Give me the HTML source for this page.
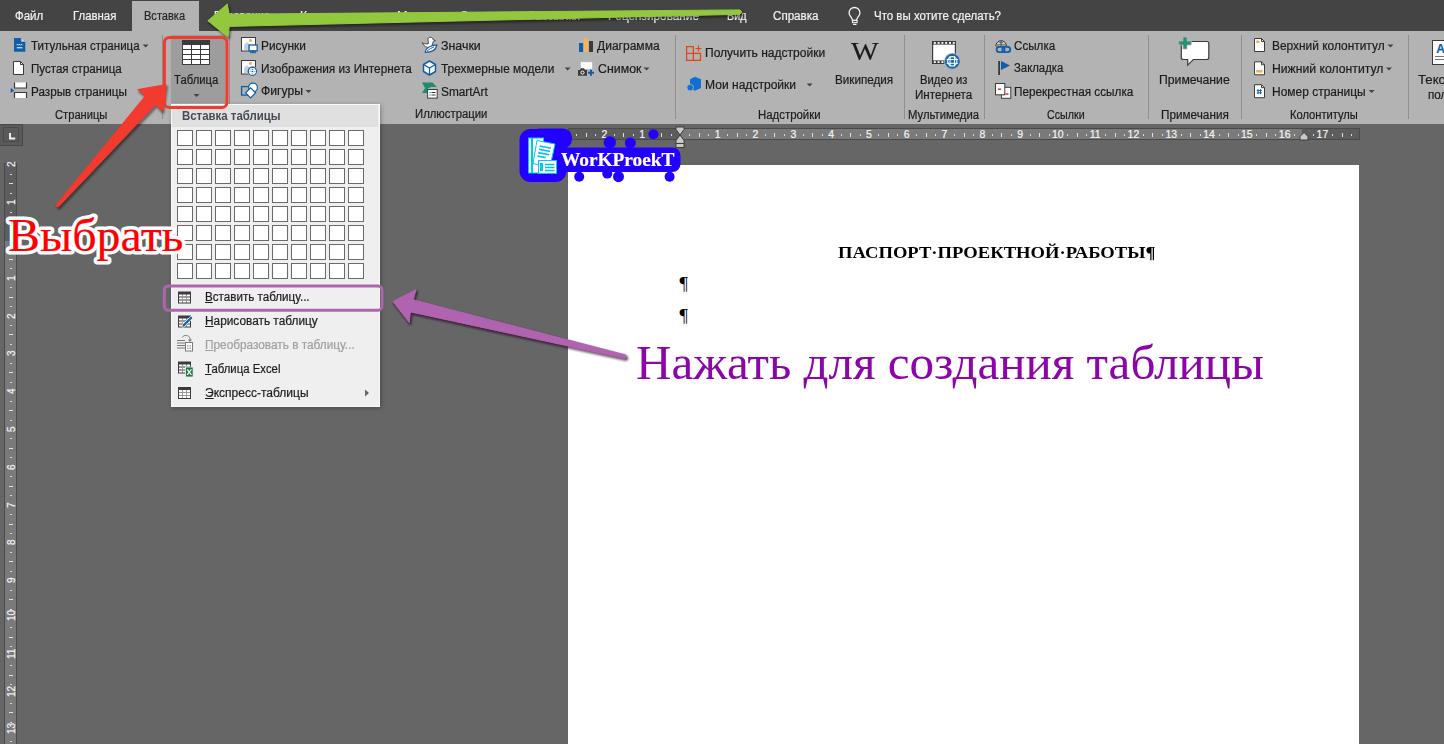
<!DOCTYPE html><html><head><meta charset="utf-8"><style>
html,body{margin:0;padding:0;width:1444px;height:744px;overflow:hidden;background:#666;}
.b{position:absolute}
.t{position:absolute;white-space:nowrap;transform-origin:0 0;-webkit-text-stroke:0.2px currentColor}
svg{position:absolute;overflow:visible}
</style></head><body>
<div class="b" style="left:0px;top:0px;width:1444px;height:31px;background:#444444;"></div>
<div class="b" style="left:0px;top:31px;width:1444px;height:93px;background:#b3b3b3;"></div>
<div class="b" style="left:132px;top:1px;width:67px;height:30px;background:#b3b3b3;"></div>
<div class="b" style="left:0px;top:124px;width:1444px;height:620px;background:#666666;"></div>
<div class="b" style="left:162px;top:35px;width:1px;height:84px;background:#8f8f8f;"></div>
<div class="b" style="left:229px;top:35px;width:1px;height:84px;background:#8f8f8f;"></div>
<div class="b" style="left:675px;top:35px;width:1px;height:84px;background:#8f8f8f;"></div>
<div class="b" style="left:904px;top:35px;width:1px;height:84px;background:#8f8f8f;"></div>
<div class="b" style="left:984px;top:35px;width:1px;height:84px;background:#8f8f8f;"></div>
<div class="b" style="left:1148px;top:35px;width:1px;height:84px;background:#8f8f8f;"></div>
<div class="b" style="left:1241px;top:35px;width:1px;height:84px;background:#8f8f8f;"></div>
<div class="b" style="left:1408px;top:35px;width:1px;height:84px;background:#8f8f8f;"></div>
<div class="b" style="left:568px;top:128px;width:792px;height:12px;background:#4a4a4a;"></div>
<div class="b" style="left:569px;top:129px;width:790px;height:10px;background:#5d5d5d;"></div>
<div class="b" style="left:680px;top:129px;width:622px;height:10px;background:#7a7a7a;"></div>
<div class="b" style="left:4px;top:163px;width:13px;height:581px;background:#4a4a4a;"></div>
<div class="b" style="left:5px;top:164px;width:11px;height:580px;background:#5d5d5d;"></div>
<div class="b" style="left:5px;top:241px;width:11px;height:503px;background:#7a7a7a;"></div>
<div class="b" style="left:-1px;top:124px;width:24px;height:22px;background:#5a5a5a;box-sizing:border-box;border:1px solid #484848"></div>
<div class="b" style="left:3px;top:127px;width:16px;height:15px;background:transparent;box-sizing:border-box;border:1px solid #4a4a4a"></div>
<div class="b" style="left:568px;top:165px;width:791px;height:579px;background:#ffffff;"></div>
<div class="b" style="left:576px;top:134px;width:1px;height:2px;background:#d8d8d8;"></div>
<div class="b" style="left:586px;top:133px;width:1px;height:4px;background:#e0e0e0;"></div>
<div class="b" style="left:595px;top:134px;width:1px;height:2px;background:#d8d8d8;"></div>
<div class="b" style="left:614px;top:134px;width:1px;height:2px;background:#d8d8d8;"></div>
<div class="b" style="left:623px;top:133px;width:1px;height:4px;background:#e0e0e0;"></div>
<div class="b" style="left:633px;top:134px;width:1px;height:2px;background:#d8d8d8;"></div>
<div class="b" style="left:652px;top:134px;width:1px;height:2px;background:#d8d8d8;"></div>
<div class="b" style="left:661px;top:133px;width:1px;height:4px;background:#e0e0e0;"></div>
<div class="b" style="left:671px;top:134px;width:1px;height:2px;background:#d8d8d8;"></div>
<div class="b" style="left:689px;top:134px;width:1px;height:2px;background:#d8d8d8;"></div>
<div class="b" style="left:699px;top:133px;width:1px;height:4px;background:#e0e0e0;"></div>
<div class="b" style="left:708px;top:134px;width:1px;height:2px;background:#d8d8d8;"></div>
<div class="b" style="left:727px;top:134px;width:1px;height:2px;background:#d8d8d8;"></div>
<div class="b" style="left:737px;top:133px;width:1px;height:4px;background:#e0e0e0;"></div>
<div class="b" style="left:746px;top:134px;width:1px;height:2px;background:#d8d8d8;"></div>
<div class="b" style="left:765px;top:134px;width:1px;height:2px;background:#d8d8d8;"></div>
<div class="b" style="left:774px;top:133px;width:1px;height:4px;background:#e0e0e0;"></div>
<div class="b" style="left:784px;top:134px;width:1px;height:2px;background:#d8d8d8;"></div>
<div class="b" style="left:803px;top:134px;width:1px;height:2px;background:#d8d8d8;"></div>
<div class="b" style="left:812px;top:133px;width:1px;height:4px;background:#e0e0e0;"></div>
<div class="b" style="left:822px;top:134px;width:1px;height:2px;background:#d8d8d8;"></div>
<div class="b" style="left:841px;top:134px;width:1px;height:2px;background:#d8d8d8;"></div>
<div class="b" style="left:850px;top:133px;width:1px;height:4px;background:#e0e0e0;"></div>
<div class="b" style="left:860px;top:134px;width:1px;height:2px;background:#d8d8d8;"></div>
<div class="b" style="left:878px;top:134px;width:1px;height:2px;background:#d8d8d8;"></div>
<div class="b" style="left:888px;top:133px;width:1px;height:4px;background:#e0e0e0;"></div>
<div class="b" style="left:897px;top:134px;width:1px;height:2px;background:#d8d8d8;"></div>
<div class="b" style="left:916px;top:134px;width:1px;height:2px;background:#d8d8d8;"></div>
<div class="b" style="left:926px;top:133px;width:1px;height:4px;background:#e0e0e0;"></div>
<div class="b" style="left:935px;top:134px;width:1px;height:2px;background:#d8d8d8;"></div>
<div class="b" style="left:954px;top:134px;width:1px;height:2px;background:#d8d8d8;"></div>
<div class="b" style="left:964px;top:133px;width:1px;height:4px;background:#e0e0e0;"></div>
<div class="b" style="left:973px;top:134px;width:1px;height:2px;background:#d8d8d8;"></div>
<div class="b" style="left:992px;top:134px;width:1px;height:2px;background:#d8d8d8;"></div>
<div class="b" style="left:1001px;top:133px;width:1px;height:4px;background:#e0e0e0;"></div>
<div class="b" style="left:1011px;top:134px;width:1px;height:2px;background:#d8d8d8;"></div>
<div class="b" style="left:1030px;top:134px;width:1px;height:2px;background:#d8d8d8;"></div>
<div class="b" style="left:1039px;top:133px;width:1px;height:4px;background:#e0e0e0;"></div>
<div class="b" style="left:1049px;top:134px;width:1px;height:2px;background:#d8d8d8;"></div>
<div class="b" style="left:1067px;top:134px;width:1px;height:2px;background:#d8d8d8;"></div>
<div class="b" style="left:1077px;top:133px;width:1px;height:4px;background:#e0e0e0;"></div>
<div class="b" style="left:1086px;top:134px;width:1px;height:2px;background:#d8d8d8;"></div>
<div class="b" style="left:1105px;top:134px;width:1px;height:2px;background:#d8d8d8;"></div>
<div class="b" style="left:1115px;top:133px;width:1px;height:4px;background:#e0e0e0;"></div>
<div class="b" style="left:1124px;top:134px;width:1px;height:2px;background:#d8d8d8;"></div>
<div class="b" style="left:1143px;top:134px;width:1px;height:2px;background:#d8d8d8;"></div>
<div class="b" style="left:1152px;top:133px;width:1px;height:4px;background:#e0e0e0;"></div>
<div class="b" style="left:1162px;top:134px;width:1px;height:2px;background:#d8d8d8;"></div>
<div class="b" style="left:1181px;top:134px;width:1px;height:2px;background:#d8d8d8;"></div>
<div class="b" style="left:1190px;top:133px;width:1px;height:4px;background:#e0e0e0;"></div>
<div class="b" style="left:1200px;top:134px;width:1px;height:2px;background:#d8d8d8;"></div>
<div class="b" style="left:1219px;top:134px;width:1px;height:2px;background:#d8d8d8;"></div>
<div class="b" style="left:1228px;top:133px;width:1px;height:4px;background:#e0e0e0;"></div>
<div class="b" style="left:1238px;top:134px;width:1px;height:2px;background:#d8d8d8;"></div>
<div class="b" style="left:1256px;top:134px;width:1px;height:2px;background:#d8d8d8;"></div>
<div class="b" style="left:1266px;top:133px;width:1px;height:4px;background:#e0e0e0;"></div>
<div class="b" style="left:1275px;top:134px;width:1px;height:2px;background:#d8d8d8;"></div>
<div class="b" style="left:1294px;top:134px;width:1px;height:2px;background:#d8d8d8;"></div>
<div class="b" style="left:1304px;top:133px;width:1px;height:4px;background:#e0e0e0;"></div>
<div class="b" style="left:1313px;top:134px;width:1px;height:2px;background:#d8d8d8;"></div>
<div class="b" style="left:1332px;top:134px;width:1px;height:2px;background:#d8d8d8;"></div>
<div class="b" style="left:1342px;top:133px;width:1px;height:4px;background:#e0e0e0;"></div>
<div class="b" style="left:1351px;top:134px;width:1px;height:2px;background:#d8d8d8;"></div>
<div class="b" style="left:10px;top:174px;width:2px;height:1px;background:#d8d8d8;"></div>
<div class="b" style="left:9px;top:183px;width:4px;height:1px;background:#e0e0e0;"></div>
<div class="b" style="left:10px;top:193px;width:2px;height:1px;background:#d8d8d8;"></div>
<div class="b" style="left:10px;top:212px;width:2px;height:1px;background:#d8d8d8;"></div>
<div class="b" style="left:9px;top:221px;width:4px;height:1px;background:#e0e0e0;"></div>
<div class="b" style="left:10px;top:231px;width:2px;height:1px;background:#d8d8d8;"></div>
<div class="b" style="left:10px;top:249px;width:2px;height:1px;background:#d8d8d8;"></div>
<div class="b" style="left:9px;top:259px;width:4px;height:1px;background:#e0e0e0;"></div>
<div class="b" style="left:10px;top:268px;width:2px;height:1px;background:#d8d8d8;"></div>
<div class="b" style="left:10px;top:287px;width:2px;height:1px;background:#d8d8d8;"></div>
<div class="b" style="left:9px;top:297px;width:4px;height:1px;background:#e0e0e0;"></div>
<div class="b" style="left:10px;top:306px;width:2px;height:1px;background:#d8d8d8;"></div>
<div class="b" style="left:10px;top:325px;width:2px;height:1px;background:#d8d8d8;"></div>
<div class="b" style="left:9px;top:334px;width:4px;height:1px;background:#e0e0e0;"></div>
<div class="b" style="left:10px;top:344px;width:2px;height:1px;background:#d8d8d8;"></div>
<div class="b" style="left:10px;top:363px;width:2px;height:1px;background:#d8d8d8;"></div>
<div class="b" style="left:9px;top:372px;width:4px;height:1px;background:#e0e0e0;"></div>
<div class="b" style="left:10px;top:382px;width:2px;height:1px;background:#d8d8d8;"></div>
<div class="b" style="left:10px;top:401px;width:2px;height:1px;background:#d8d8d8;"></div>
<div class="b" style="left:9px;top:410px;width:4px;height:1px;background:#e0e0e0;"></div>
<div class="b" style="left:10px;top:420px;width:2px;height:1px;background:#d8d8d8;"></div>
<div class="b" style="left:10px;top:438px;width:2px;height:1px;background:#d8d8d8;"></div>
<div class="b" style="left:9px;top:448px;width:4px;height:1px;background:#e0e0e0;"></div>
<div class="b" style="left:10px;top:457px;width:2px;height:1px;background:#d8d8d8;"></div>
<div class="b" style="left:10px;top:476px;width:2px;height:1px;background:#d8d8d8;"></div>
<div class="b" style="left:9px;top:486px;width:4px;height:1px;background:#e0e0e0;"></div>
<div class="b" style="left:10px;top:495px;width:2px;height:1px;background:#d8d8d8;"></div>
<div class="b" style="left:10px;top:514px;width:2px;height:1px;background:#d8d8d8;"></div>
<div class="b" style="left:9px;top:524px;width:4px;height:1px;background:#e0e0e0;"></div>
<div class="b" style="left:10px;top:533px;width:2px;height:1px;background:#d8d8d8;"></div>
<div class="b" style="left:10px;top:552px;width:2px;height:1px;background:#d8d8d8;"></div>
<div class="b" style="left:9px;top:561px;width:4px;height:1px;background:#e0e0e0;"></div>
<div class="b" style="left:10px;top:571px;width:2px;height:1px;background:#d8d8d8;"></div>
<div class="b" style="left:10px;top:590px;width:2px;height:1px;background:#d8d8d8;"></div>
<div class="b" style="left:9px;top:599px;width:4px;height:1px;background:#e0e0e0;"></div>
<div class="b" style="left:10px;top:609px;width:2px;height:1px;background:#d8d8d8;"></div>
<div class="b" style="left:10px;top:627px;width:2px;height:1px;background:#d8d8d8;"></div>
<div class="b" style="left:9px;top:637px;width:4px;height:1px;background:#e0e0e0;"></div>
<div class="b" style="left:10px;top:646px;width:2px;height:1px;background:#d8d8d8;"></div>
<div class="b" style="left:10px;top:665px;width:2px;height:1px;background:#d8d8d8;"></div>
<div class="b" style="left:9px;top:675px;width:4px;height:1px;background:#e0e0e0;"></div>
<div class="b" style="left:10px;top:684px;width:2px;height:1px;background:#d8d8d8;"></div>
<div class="b" style="left:10px;top:703px;width:2px;height:1px;background:#d8d8d8;"></div>
<div class="b" style="left:9px;top:712px;width:4px;height:1px;background:#e0e0e0;"></div>
<div class="b" style="left:10px;top:722px;width:2px;height:1px;background:#d8d8d8;"></div>
<div class="b" style="left:10px;top:741px;width:2px;height:1px;background:#d8d8d8;"></div>
<div class="t" style="left:17px;top:164.4px;font:10px 'Liberation Sans', sans-serif;line-height:10px;color:#f4f4f4;transform:translate(-10px,0) rotate(-90deg);transform-origin:0 0"><span style="display:inline-block;transform:translate(-3px,0)">2</span></div>
<div class="t" style="left:17px;top:202.2px;font:10px 'Liberation Sans', sans-serif;line-height:10px;color:#f4f4f4;transform:translate(-10px,0) rotate(-90deg);transform-origin:0 0"><span style="display:inline-block;transform:translate(-3px,0)">1</span></div>
<div class="t" style="left:17px;top:277.8px;font:10px 'Liberation Sans', sans-serif;line-height:10px;color:#f4f4f4;transform:translate(-10px,0) rotate(-90deg);transform-origin:0 0"><span style="display:inline-block;transform:translate(-3px,0)">1</span></div>
<div class="t" style="left:17px;top:315.6px;font:10px 'Liberation Sans', sans-serif;line-height:10px;color:#f4f4f4;transform:translate(-10px,0) rotate(-90deg);transform-origin:0 0"><span style="display:inline-block;transform:translate(-3px,0)">2</span></div>
<div class="t" style="left:17px;top:353.4px;font:10px 'Liberation Sans', sans-serif;line-height:10px;color:#f4f4f4;transform:translate(-10px,0) rotate(-90deg);transform-origin:0 0"><span style="display:inline-block;transform:translate(-3px,0)">3</span></div>
<div class="t" style="left:17px;top:391.2px;font:10px 'Liberation Sans', sans-serif;line-height:10px;color:#f4f4f4;transform:translate(-10px,0) rotate(-90deg);transform-origin:0 0"><span style="display:inline-block;transform:translate(-3px,0)">4</span></div>
<div class="t" style="left:17px;top:429.0px;font:10px 'Liberation Sans', sans-serif;line-height:10px;color:#f4f4f4;transform:translate(-10px,0) rotate(-90deg);transform-origin:0 0"><span style="display:inline-block;transform:translate(-3px,0)">5</span></div>
<div class="t" style="left:17px;top:466.8px;font:10px 'Liberation Sans', sans-serif;line-height:10px;color:#f4f4f4;transform:translate(-10px,0) rotate(-90deg);transform-origin:0 0"><span style="display:inline-block;transform:translate(-3px,0)">6</span></div>
<div class="t" style="left:17px;top:504.6px;font:10px 'Liberation Sans', sans-serif;line-height:10px;color:#f4f4f4;transform:translate(-10px,0) rotate(-90deg);transform-origin:0 0"><span style="display:inline-block;transform:translate(-3px,0)">7</span></div>
<div class="t" style="left:17px;top:542.4px;font:10px 'Liberation Sans', sans-serif;line-height:10px;color:#f4f4f4;transform:translate(-10px,0) rotate(-90deg);transform-origin:0 0"><span style="display:inline-block;transform:translate(-3px,0)">8</span></div>
<div class="t" style="left:17px;top:580.2px;font:10px 'Liberation Sans', sans-serif;line-height:10px;color:#f4f4f4;transform:translate(-10px,0) rotate(-90deg);transform-origin:0 0"><span style="display:inline-block;transform:translate(-3px,0)">9</span></div>
<div class="t" style="left:17px;top:618.0px;font:10px 'Liberation Sans', sans-serif;line-height:10px;color:#f4f4f4;transform:translate(-10px,0) rotate(-90deg);transform-origin:0 0"><span style="display:inline-block;transform:translate(-3px,0)">10</span></div>
<div class="t" style="left:17px;top:655.8px;font:10px 'Liberation Sans', sans-serif;line-height:10px;color:#f4f4f4;transform:translate(-10px,0) rotate(-90deg);transform-origin:0 0"><span style="display:inline-block;transform:translate(-3px,0)">11</span></div>
<div class="t" style="left:17px;top:693.6px;font:10px 'Liberation Sans', sans-serif;line-height:10px;color:#f4f4f4;transform:translate(-10px,0) rotate(-90deg);transform-origin:0 0"><span style="display:inline-block;transform:translate(-3px,0)">12</span></div>
<div class="t" style="left:17px;top:731.4px;font:10px 'Liberation Sans', sans-serif;line-height:10px;color:#f4f4f4;transform:translate(-10px,0) rotate(-90deg);transform-origin:0 0"><span style="display:inline-block;transform:translate(-3px,0)">13</span></div>
<svg style="left:0;top:0" width="30" height="150"><path d="M10 133v5.5h5.2" stroke="#f2f2f2" stroke-width="1.9" fill="none"/></svg>
<svg style="left:0;top:0" width="1444" height="160"><path d="M676 127h8v2.5l-4 5.5 4 5.5v3h-8v-3l4-5.5-4-5.5z" fill="#c9c9c9" stroke="#3d3d3d" stroke-width="1"/><rect x="676" y="143.5" width="8" height="4" fill="#c9c9c9" stroke="#3d3d3d" stroke-width="1"/><path d="M1300 140h8v-3.5l-4-4-4 4z" fill="#c9c9c9" stroke="#3d3d3d" stroke-width="1"/></svg>
<div class="b" style="left:171px;top:35px;width:54px;height:68px;background:#9d9d9d;"></div>
<svg style="left:0;top:0" width="1444" height="130"><g transform="translate(0,0.8)"><path d="M852.5 19.5c-.3-1.8-1.2-2.8-2.2-4.2-.8-1-1.2-2-1.2-3.3 0-3 2.4-5.3 5.4-5.3s5.4 2.3 5.4 5.3c0 1.3-.4 2.3-1.2 3.3-1 1.4-1.9 2.4-2.2 4.2z" fill="none" stroke="#f2f2f2" stroke-width="1.3"/><rect x="852.5" y="19.6" width="4.6" height="2.2" fill="none" stroke="#f2f2f2" stroke-width="1.1"/><rect x="853" y="23" width="3.5" height="1.2" fill="#f2f2f2"/></g><path d="M14 38h7.3l4 3.5v10.2H14z" fill="#0f5ea8"/><path d="M21.3 38v3.5h4" fill="#cfe0f0" stroke="#b3b3b3" stroke-width="0.6"/><path d="M16.5 45.2l1-1 1 1 1-1 1 1 1-1 1 1" fill="none" stroke="#fff" stroke-width="0.9"/><rect x="16.8" y="47.3" width="5.6" height="1" fill="#fff"/><path d="M13.5 61.5h7l3 3v10h-10z" fill="#fff" stroke="#3b3b3b" stroke-width="1" stroke-linejoin="round"/><path d="M20.5 61.5v3h3" fill="none" stroke="#3b3b3b" stroke-width="1"/><path d="M14.5 82.5v5.5h12v-5.5" fill="#fff" stroke="#3b3b3b" stroke-width="1.2"/><path d="M14.5 98v-5.5h12v5.5" fill="#fff" stroke="#3b3b3b" stroke-width="1.2"/><path d="M10.7 88l3.5 2.5-3.5 2.5z" fill="#0f5ea8"/><rect x="182" y="40" width="28" height="25" fill="#3b3b3b"/><rect x="183.0" y="45" width="8" height="4" fill="#fff"/><rect x="192.0" y="45" width="8" height="4" fill="#fff"/><rect x="201.0" y="45" width="8" height="4" fill="#fff"/><rect x="183.0" y="50" width="8" height="4" fill="#fff"/><rect x="192.0" y="50" width="8" height="4" fill="#fff"/><rect x="201.0" y="50" width="8" height="4" fill="#fff"/><rect x="183.0" y="55" width="8" height="4" fill="#fff"/><rect x="192.0" y="55" width="8" height="4" fill="#fff"/><rect x="201.0" y="55" width="8" height="4" fill="#fff"/><rect x="183.0" y="60" width="8" height="4" fill="#fff"/><rect x="192.0" y="60" width="8" height="4" fill="#fff"/><rect x="201.0" y="60" width="8" height="4" fill="#fff"/><path d="M193.5 94h6l-3 3z" fill="#444"/><rect x="241.5" y="37.5" width="14" height="13.5" fill="#fff" stroke="#3b3b3b" stroke-width="1"/><path d="M244 50v-5l3-3 3 3v5z" fill="#b9d3ea"/><circle cx="250.5" cy="40.5" r="1.4" fill="#f0a848"/><rect x="249" y="45" width="8.2" height="5.8" fill="#fff" stroke="#0f5ea8" stroke-width="1.3"/><rect x="252.3" y="51" width="1.6" height="1.6" fill="#0f5ea8"/><rect x="250" y="52.2" width="6" height="1" fill="#0f5ea8"/><rect x="241.5" y="60.5" width="14" height="13.5" fill="#fff" stroke="#3b3b3b" stroke-width="1"/><path d="M244 73v-5l3-3 3 3v5z" fill="#b9d3ea"/><circle cx="250.5" cy="63.5" r="1.4" fill="#f0a848"/><circle cx="252.4" cy="71.3" r="5.2" fill="#b3b3b3"/><circle cx="252.4" cy="71.3" r="4.6" fill="#0f5ea8"/><circle cx="252.4" cy="71.3" r="2.85" fill="none" stroke="#fff" stroke-width="1.1"/><rect x="248.95" y="69.92" width="6.90" height="1" fill="#fff"/><rect x="248.95" y="72.22" width="6.90" height="1" fill="#fff"/><rect x="250.52" y="68.08" width="1" height="6.44" fill="#fff"/><rect x="253.28" y="68.08" width="1" height="6.44" fill="#fff"/><rect x="241.6" y="86.6" width="8.5" height="8.5" fill="none" stroke="#0f5ea8" stroke-width="1.3"/><circle cx="253" cy="87.5" r="4.4" fill="#fff" stroke="#0f5ea8" stroke-width="1.2"/><path d="M250.6 87.8l5 5-5 5-5-5z" fill="#fff" stroke="#0f5ea8" stroke-width="1.2"/><path d="M422.2 42.6c1.5 1.2 3.5 1.6 6 1.2 .3-1.6.2-2.6-.2-3.6-.4-1.6.8-2.9 2.4-2.9 1.5 0 2.6 1 2.7 2.4l2.3.9-2.2 1c-.1 1.2-.5 2.1-1.2 2.8 1.5.4 2.8 1.2 3.5 2.4-1.2.8-3 1.2-5.2 1.1-3.5-.2-6.8-1.6-8.1-5.3z" fill="#fff" stroke="#3b3b3b" stroke-width="0.9" stroke-linejoin="round"/><path d="M425.2 52.3c.2-3.6 3.4-6.6 11.7-7.5-.8 4.6-4 7.5-11.7 7.5z" fill="#fff" stroke="#0f5ea8" stroke-width="1.3" stroke-linejoin="round"/><path d="M427 51.2c2.2-2 4.5-3.3 7-4.3" stroke="#0f5ea8" stroke-width="1" fill="none"/><path d="M429.5 61l6 3.5v7l-6 3.5-6-3.5v-7z" fill="#fff" stroke="#0f5ea8" stroke-width="1.5" stroke-linejoin="round"/><path d="M423.5 64.5l6 3.5 6-3.5M429.5 68v7" fill="none" stroke="#0f5ea8" stroke-width="1.3"/><path d="M422 82.6h10.5l4.4 4.4H431l-4 2v4h-5l3-5z" fill="#1e8c6e"/><rect x="427.6" y="89.5" width="9.6" height="8.6" fill="#fff" stroke="#3b3b3b" stroke-width="1"/><rect x="429.5" y="92" width="1" height="1" fill="#3b3b3b"/><rect x="431.5" y="92" width="4" height="1" fill="#3b3b3b"/><rect x="429.5" y="94.5" width="1" height="1" fill="#3b3b3b"/><rect x="431.5" y="94.5" width="4" height="1" fill="#3b3b3b"/><rect x="579" y="43" width="4.1" height="9" fill="#0f5ea8"/><rect x="584" y="38" width="4.1" height="14" fill="#f0b462"/><rect x="589" y="41" width="4" height="11" fill="#3b3b3b"/><rect x="581" y="62.3" width="11" height="6.5" fill="#fff" stroke="#fff" stroke-width="0.8" stroke-dasharray="1 1"/><path d="M578 70h2l1-1.7h3l1 1.7h2v5.7h-9z" fill="#3b3b3b"/><circle cx="582.5" cy="72.6" r="1.6" fill="none" stroke="#fff" stroke-width="1"/><path d="M590 69.8h2v2h2v2h-2v2h-2v-2h-2v-2h2z" fill="#0f5ea8"/><path d="M686.6 46.6h6.8v6.8h7.1v6.9h-13.9zM686.6 53.4h6.8v6.9M693.4 53.4v6.9" fill="none" stroke="#e3431a" stroke-width="1.2"/><path d="M698.5 45.5v6M695.5 48.5h6" stroke="#e3431a" stroke-width="1.2"/><path d="M695 76.7l6 2.6v8.6l-6 2.9-5-2.3v-9.2z" fill="#1170cf"/><circle cx="690.2" cy="87.6" r="3.3" fill="#1170cf" stroke="#b3b3b3" stroke-width="0.8"/><rect x="932" y="41" width="24" height="23" fill="#3b3b3b"/><rect x="933.2" y="44.6" width="21.6" height="15.8" fill="#fff"/><rect x="933.8" y="42" width="2" height="1.8" fill="#fff"/><rect x="937.6" y="42" width="2" height="1.8" fill="#fff"/><rect x="941.4" y="42" width="2" height="1.8" fill="#fff"/><rect x="945.2" y="42" width="2" height="1.8" fill="#fff"/><rect x="949.0" y="42" width="2" height="1.8" fill="#fff"/><rect x="952.8" y="42" width="2" height="1.8" fill="#fff"/><rect x="933.8" y="61.2" width="2" height="1.8" fill="#fff"/><rect x="937.6" y="61.2" width="2" height="1.8" fill="#fff"/><rect x="941.4" y="61.2" width="2" height="1.8" fill="#fff"/><circle cx="952.3" cy="61.3" r="8.3" fill="#b3b3b3"/><circle cx="952.3" cy="61.3" r="7.5" fill="#1a6aaa"/><circle cx="952.3" cy="61.3" r="4.65" fill="none" stroke="#fff" stroke-width="1.1"/><rect x="946.67" y="59.05" width="11.25" height="1" fill="#fff"/><rect x="946.67" y="62.80" width="11.25" height="1" fill="#fff"/><rect x="949.55" y="56.05" width="1" height="10.50" fill="#fff"/><rect x="954.05" y="56.05" width="1" height="10.50" fill="#fff"/><path d="M995.8 46a5.3 5.3 0 0 1 10.6 0z" fill="#fff" stroke="#3b3b3b" stroke-width="1"/><path d="M998.5 42.2h5M996.6 44.2h9M1001.1 40.8v5" stroke="#3b3b3b" stroke-width="0.9"/><rect x="996.6" y="46.8" width="8" height="5.3" rx="2.6" fill="none" stroke="#0f5ea8" stroke-width="1.8"/><rect x="1002.3" y="46.8" width="8" height="5.3" rx="2.6" fill="none" stroke="#0f5ea8" stroke-width="1.8"/><rect x="998.2" y="61" width="1.8" height="14" fill="#3b3b3b"/><path d="M1001 61l9 4.5-9 4.5z" fill="#0f5ea8"/><rect x="1001.5" y="87.3" width="9.3" height="11" fill="#fff" stroke="#3b3b3b" stroke-width="1"/><rect x="1005.5" y="93.3" width="3" height="1.4" fill="#d22"/><rect x="995.5" y="83.5" width="9.3" height="11.3" fill="#fff" stroke="#3b3b3b" stroke-width="1"/><rect x="998" y="88.5" width="3.2" height="1.4" fill="#d22"/><path d="M1183.3 41.5h23.5a2 2 0 0 1 2 2v14a2 2 0 0 1-2 2h-13.5l-5.6 5.6v-5.6h-4.4a2 2 0 0 1-2-2v-14a2 2 0 0 1 2-2z" fill="#fff" stroke="#3b3b3b" stroke-width="1.2"/><path d="M1183 37h4v4h4.2v4H1187v4h-4v-4h-4.2v-4h4.2z" fill="#2e8b76" stroke="#b3b3b3" stroke-width="0.8"/><path d="M1254.5 38.5h7l3 3v10h-10z" fill="#fff" stroke="#3b3b3b" stroke-width="1" stroke-linejoin="round"/><path d="M1261.5 38.5v3h3" fill="none" stroke="#3b3b3b" stroke-width="1"/><rect x="1256.2" y="40.5" width="3.3" height="2.5" fill="#eeb062"/><path d="M1254.5 61.8h7l3 3v10h-10z" fill="#fff" stroke="#3b3b3b" stroke-width="1" stroke-linejoin="round"/><path d="M1261.5 61.8v3h3" fill="none" stroke="#3b3b3b" stroke-width="1"/><rect x="1256.2" y="70" width="6.4" height="2.6" fill="#eeb062"/><path d="M1254.5 84.7h7l3 3v10h-10z" fill="#fff" stroke="#3b3b3b" stroke-width="1" stroke-linejoin="round"/><path d="M1261.5 84.7v3h3" fill="none" stroke="#3b3b3b" stroke-width="1"/><path d="M1258 89.2v5M1260.5 89.2v5M1256.8 90.6h5M1256.8 92.8h5" stroke="#0f5ea8" stroke-width="1"/><rect x="1432.5" y="40.5" width="20" height="24" fill="#fff" stroke="#3b3b3b" stroke-width="1"/><rect x="1435" y="56" width="12" height="1" fill="#777"/><rect x="1435" y="59" width="12" height="1" fill="#777"/></svg>
<svg style="left:0;top:0" width="1444" height="130"><path d="M142.6 44.5h6l-3 3z" fill="#444"/><path d="M305.5 90.0h6l-3 3z" fill="#444"/><path d="M564.6 67.5h6l-3 3z" fill="#444"/><path d="M643.5 67.5h6l-3 3z" fill="#444"/><path d="M806.6 83.5h6l-3 3z" fill="#444"/><path d="M1387.5 44.5h6l-3 3z" fill="#444"/><path d="M1386 67.5h6l-3 3z" fill="#444"/><path d="M1368.6 90.0h6l-3 3z" fill="#444"/></svg>
<div class="t" style="left:15.2px;top:9.8px;font:normal 12px 'Liberation Sans', sans-serif;line-height:12px;color:#f2f2f2;transform:scaleX(0.9554);">Файл</div>
<div class="t" style="left:73.1px;top:9.8px;font:normal 12px 'Liberation Sans', sans-serif;line-height:12px;color:#f2f2f2;transform:scaleX(0.9499);">Главная</div>
<div class="t" style="left:144.4px;top:9.8px;font:normal 12px 'Liberation Sans', sans-serif;line-height:12px;color:#262626;transform:scaleX(0.9213);">Вставка</div>
<div class="t" style="left:214.0px;top:9.8px;font:normal 12px 'Liberation Sans', sans-serif;line-height:12px;color:#f2f2f2;transform:scaleX(0.9266);">Рисование</div>
<div class="t" style="left:300.0px;top:9.8px;font:normal 12px 'Liberation Sans', sans-serif;line-height:12px;color:#f2f2f2;transform:scaleX(1.0084);">Конструктор</div>
<div class="t" style="left:397.0px;top:9.8px;font:normal 12px 'Liberation Sans', sans-serif;line-height:12px;color:#f2f2f2;transform:scaleX(1.0598);">Макет</div>
<div class="t" style="left:460.0px;top:9.8px;font:normal 12px 'Liberation Sans', sans-serif;line-height:12px;color:#f2f2f2;transform:scaleX(0.9467);">Ссылки</div>
<div class="t" style="left:528.0px;top:9.8px;font:normal 12px 'Liberation Sans', sans-serif;line-height:12px;color:#f2f2f2;transform:scaleX(0.9655);">Рассылки</div>
<div class="t" style="left:608.0px;top:9.8px;font:normal 12px 'Liberation Sans', sans-serif;line-height:12px;color:#f2f2f2;transform:scaleX(0.9820);">Рецензирование</div>
<div class="t" style="left:726.6px;top:9.8px;font:normal 12px 'Liberation Sans', sans-serif;line-height:12px;color:#f2f2f2;transform:scaleX(0.8932);">Вид</div>
<div class="t" style="left:773.2px;top:9.8px;font:normal 12px 'Liberation Sans', sans-serif;line-height:12px;color:#f2f2f2;transform:scaleX(0.9665);">Справка</div>
<div class="t" style="left:874.0px;top:9.8px;font:normal 12px 'Liberation Sans', sans-serif;line-height:12px;color:#f2f2f2;transform:scaleX(0.9574);">Что вы хотите сделать?</div>
<div class="t" style="left:30.6px;top:39.6px;font:normal 12px 'Liberation Sans', sans-serif;line-height:12px;color:#1c1c1c;transform:scaleX(0.9612);">Титульная страница</div>
<div class="t" style="left:30.6px;top:62.6px;font:normal 12px 'Liberation Sans', sans-serif;line-height:12px;color:#1c1c1c;transform:scaleX(0.9641);">Пустая страница</div>
<div class="t" style="left:30.6px;top:85.6px;font:normal 12px 'Liberation Sans', sans-serif;line-height:12px;color:#1c1c1c;transform:scaleX(0.9743);">Разрыв страницы</div>
<div class="t" style="left:54.9px;top:108.6px;font:normal 12px 'Liberation Sans', sans-serif;line-height:12px;color:#1c1c1c;transform:scaleX(0.9300);">Страницы</div>
<div class="t" style="left:173.9px;top:74.2px;font:normal 12px 'Liberation Sans', sans-serif;line-height:12px;color:#1c1c1c;transform:scaleX(0.9413);">Таблица</div>
<div class="t" style="left:260.5px;top:39.8px;font:normal 12px 'Liberation Sans', sans-serif;line-height:12px;color:#1c1c1c;transform:scaleX(0.9890);">Рисунки</div>
<div class="t" style="left:260.5px;top:62.6px;font:normal 12px 'Liberation Sans', sans-serif;line-height:12px;color:#1c1c1c;transform:scaleX(0.9844);">Изображения из Интернета</div>
<div class="t" style="left:260.5px;top:84.9px;font:normal 12px 'Liberation Sans', sans-serif;line-height:12px;color:#1c1c1c;transform:scaleX(1.0127);">Фигуры</div>
<div class="t" style="left:415.2px;top:108.2px;font:normal 12px 'Liberation Sans', sans-serif;line-height:12px;color:#1c1c1c;transform:scaleX(0.9431);">Иллюстрации</div>
<div class="t" style="left:440.9px;top:39.6px;font:normal 12px 'Liberation Sans', sans-serif;line-height:12px;color:#1c1c1c;transform:scaleX(1.0338);">Значки</div>
<div class="t" style="left:440.9px;top:62.8px;font:normal 12px 'Liberation Sans', sans-serif;line-height:12px;color:#1c1c1c;transform:scaleX(0.9926);">Трехмерные модели</div>
<div class="t" style="left:440.9px;top:85.6px;font:normal 12px 'Liberation Sans', sans-serif;line-height:12px;color:#1c1c1c;transform:scaleX(0.9864);">SmartArt</div>
<div class="t" style="left:597.0px;top:39.6px;font:normal 12px 'Liberation Sans', sans-serif;line-height:12px;color:#1c1c1c;transform:scaleX(1.0031);">Диаграмма</div>
<div class="t" style="left:597.5px;top:62.8px;font:normal 12px 'Liberation Sans', sans-serif;line-height:12px;color:#1c1c1c;transform:scaleX(1.0291);">Снимок</div>
<div class="t" style="left:705.2px;top:47.2px;font:normal 12px 'Liberation Sans', sans-serif;line-height:12px;color:#1c1c1c;transform:scaleX(1.0026);">Получить надстройки</div>
<div class="t" style="left:705.2px;top:78.8px;font:normal 12px 'Liberation Sans', sans-serif;line-height:12px;color:#1c1c1c;transform:scaleX(1.0049);">Мои надстройки</div>
<div class="t" style="left:835.4px;top:73.8px;font:normal 12px 'Liberation Sans', sans-serif;line-height:12px;color:#1c1c1c;transform:scaleX(0.9719);">Википедия</div>
<div class="t" style="left:757.8px;top:108.6px;font:normal 12px 'Liberation Sans', sans-serif;line-height:12px;color:#1c1c1c;transform:scaleX(0.9507);">Надстройки</div>
<div class="t" style="left:920.4px;top:73.5px;font:normal 12px 'Liberation Sans', sans-serif;line-height:12px;color:#1c1c1c;transform:scaleX(0.9386);">Видео из</div>
<div class="t" style="left:915.2px;top:89.4px;font:normal 12px 'Liberation Sans', sans-serif;line-height:12px;color:#1c1c1c;transform:scaleX(0.9710);">Интернета</div>
<div class="t" style="left:908.3px;top:108.5px;font:normal 12px 'Liberation Sans', sans-serif;line-height:12px;color:#1c1c1c;transform:scaleX(0.9414);">Мультимедиа</div>
<div class="t" style="left:1014.3px;top:39.7px;font:normal 12px 'Liberation Sans', sans-serif;line-height:12px;color:#1c1c1c;transform:scaleX(0.9698);">Ссылка</div>
<div class="t" style="left:1014.3px;top:62.2px;font:normal 12px 'Liberation Sans', sans-serif;line-height:12px;color:#1c1c1c;transform:scaleX(0.9450);">Закладка</div>
<div class="t" style="left:1014.3px;top:85.6px;font:normal 12px 'Liberation Sans', sans-serif;line-height:12px;color:#1c1c1c;transform:scaleX(0.9812);">Перекрестная ссылка</div>
<div class="t" style="left:1046.8px;top:108.5px;font:normal 12px 'Liberation Sans', sans-serif;line-height:12px;color:#1c1c1c;transform:scaleX(0.8899);">Ссылки</div>
<div class="t" style="left:1159.4px;top:73.5px;font:normal 12px 'Liberation Sans', sans-serif;line-height:12px;color:#1c1c1c;transform:scaleX(1.0177);">Примечание</div>
<div class="t" style="left:1160.6px;top:108.5px;font:normal 12px 'Liberation Sans', sans-serif;line-height:12px;color:#1c1c1c;transform:scaleX(0.9786);">Примечания</div>
<div class="t" style="left:1271.6px;top:39.8px;font:normal 12px 'Liberation Sans', sans-serif;line-height:12px;color:#1c1c1c;transform:scaleX(0.9930);">Верхний колонтитул</div>
<div class="t" style="left:1271.6px;top:63.0px;font:normal 12px 'Liberation Sans', sans-serif;line-height:12px;color:#1c1c1c;transform:scaleX(1.0166);">Нижний колонтитул</div>
<div class="t" style="left:1271.6px;top:85.5px;font:normal 12px 'Liberation Sans', sans-serif;line-height:12px;color:#1c1c1c;transform:scaleX(0.9973);">Номер страницы</div>
<div class="t" style="left:1289.5px;top:108.5px;font:normal 12px 'Liberation Sans', sans-serif;line-height:12px;color:#1c1c1c;transform:scaleX(0.9284);">Колонтитулы</div>
<div class="t" style="left:1418.3px;top:73.5px;font:normal 12px 'Liberation Sans', sans-serif;line-height:12px;color:#1c1c1c;transform:scaleX(1.1004);">Текстовое</div>
<div class="t" style="left:1428.4px;top:89.4px;font:normal 12px 'Liberation Sans', sans-serif;line-height:12px;color:#1c1c1c;transform:scaleX(0.9777);">поле</div>
<div class="t" style="left:601.4px;top:129.1px;font:normal 10.5px 'Liberation Sans', sans-serif;line-height:10.5px;color:#f4f4f4;">2</div>
<div class="t" style="left:639.2px;top:129.1px;font:normal 10.5px 'Liberation Sans', sans-serif;line-height:10.5px;color:#f4f4f4;">1</div>
<div class="t" style="left:714.8px;top:129.1px;font:normal 10.5px 'Liberation Sans', sans-serif;line-height:10.5px;color:#f4f4f4;">1</div>
<div class="t" style="left:752.6px;top:129.1px;font:normal 10.5px 'Liberation Sans', sans-serif;line-height:10.5px;color:#f4f4f4;">2</div>
<div class="t" style="left:790.4px;top:129.1px;font:normal 10.5px 'Liberation Sans', sans-serif;line-height:10.5px;color:#f4f4f4;">3</div>
<div class="t" style="left:828.2px;top:129.1px;font:normal 10.5px 'Liberation Sans', sans-serif;line-height:10.5px;color:#f4f4f4;">4</div>
<div class="t" style="left:866.0px;top:129.1px;font:normal 10.5px 'Liberation Sans', sans-serif;line-height:10.5px;color:#f4f4f4;">5</div>
<div class="t" style="left:903.8px;top:129.1px;font:normal 10.5px 'Liberation Sans', sans-serif;line-height:10.5px;color:#f4f4f4;">6</div>
<div class="t" style="left:941.6px;top:129.1px;font:normal 10.5px 'Liberation Sans', sans-serif;line-height:10.5px;color:#f4f4f4;">7</div>
<div class="t" style="left:979.4px;top:129.1px;font:normal 10.5px 'Liberation Sans', sans-serif;line-height:10.5px;color:#f4f4f4;">8</div>
<div class="t" style="left:1017.2px;top:129.1px;font:normal 10.5px 'Liberation Sans', sans-serif;line-height:10.5px;color:#f4f4f4;">9</div>
<div class="t" style="left:1052.0px;top:129.1px;font:normal 10.5px 'Liberation Sans', sans-serif;line-height:10.5px;color:#f4f4f4;">10</div>
<div class="t" style="left:1089.8px;top:129.1px;font:normal 10.5px 'Liberation Sans', sans-serif;line-height:10.5px;color:#f4f4f4;">11</div>
<div class="t" style="left:1127.6px;top:129.1px;font:normal 10.5px 'Liberation Sans', sans-serif;line-height:10.5px;color:#f4f4f4;">12</div>
<div class="t" style="left:1165.4px;top:129.1px;font:normal 10.5px 'Liberation Sans', sans-serif;line-height:10.5px;color:#f4f4f4;">13</div>
<div class="t" style="left:1203.2px;top:129.1px;font:normal 10.5px 'Liberation Sans', sans-serif;line-height:10.5px;color:#f4f4f4;">14</div>
<div class="t" style="left:1241.0px;top:129.1px;font:normal 10.5px 'Liberation Sans', sans-serif;line-height:10.5px;color:#f4f4f4;">15</div>
<div class="t" style="left:1278.8px;top:129.1px;font:normal 10.5px 'Liberation Sans', sans-serif;line-height:10.5px;color:#f4f4f4;">16</div>
<div class="t" style="left:1316.6px;top:129.1px;font:normal 10.5px 'Liberation Sans', sans-serif;line-height:10.5px;color:#f4f4f4;">17</div>
<div class="t" style="left:838.2px;top:243.5px;font:bold 17.5px 'Liberation Serif', serif;line-height:17.5px;color:#000;transform:scaleX(1.0632);-webkit-text-stroke:0;">ПАСПОРТ·ПРОЕКТНОЙ·РАБОТЫ¶</div>
<div class="t" style="left:679.5px;top:275.0px;font:normal 18.67px 'Liberation Serif', serif;line-height:18.67px;color:#000;-webkit-text-stroke:0;">¶</div>
<div class="t" style="left:679.5px;top:307.0px;font:normal 18.67px 'Liberation Serif', serif;line-height:18.67px;color:#000;-webkit-text-stroke:0;">¶</div>
<div class="t" style="left:851.0px;top:39.4px;font:normal 26px 'Liberation Serif', serif;line-height:26px;color:#1a1a1a;transform:scaleX(1.1244);">W</div>
<div class="t" style="left:1436.3px;top:42.6px;font:bold 12px 'Liberation Sans', sans-serif;line-height:12px;color:#0f5ea8;">A</div>
<div class="b" style="left:171px;top:104px;width:209px;height:303px;background:#efefef;box-sizing:border-box;border:1px solid #f9f9f9;box-shadow:1px 1px 4px rgba(0,0,0,0.3)"></div>
<div class="b" style="left:172px;top:105px;width:206px;height:22px;background:#e0e0e0;"></div>
<svg style="left:0;top:0" width="400" height="300"><g fill="#fff" stroke="#6a6a6a" stroke-width="1"><rect x="177.5" y="130.5" width="15" height="15"/><rect x="196.5" y="130.5" width="15" height="15"/><rect x="215.5" y="130.5" width="15" height="15"/><rect x="234.5" y="130.5" width="15" height="15"/><rect x="253.5" y="130.5" width="15" height="15"/><rect x="272.5" y="130.5" width="15" height="15"/><rect x="291.5" y="130.5" width="15" height="15"/><rect x="310.5" y="130.5" width="15" height="15"/><rect x="329.5" y="130.5" width="15" height="15"/><rect x="348.5" y="130.5" width="15" height="15"/><rect x="177.5" y="149.5" width="15" height="15"/><rect x="196.5" y="149.5" width="15" height="15"/><rect x="215.5" y="149.5" width="15" height="15"/><rect x="234.5" y="149.5" width="15" height="15"/><rect x="253.5" y="149.5" width="15" height="15"/><rect x="272.5" y="149.5" width="15" height="15"/><rect x="291.5" y="149.5" width="15" height="15"/><rect x="310.5" y="149.5" width="15" height="15"/><rect x="329.5" y="149.5" width="15" height="15"/><rect x="348.5" y="149.5" width="15" height="15"/><rect x="177.5" y="168.5" width="15" height="15"/><rect x="196.5" y="168.5" width="15" height="15"/><rect x="215.5" y="168.5" width="15" height="15"/><rect x="234.5" y="168.5" width="15" height="15"/><rect x="253.5" y="168.5" width="15" height="15"/><rect x="272.5" y="168.5" width="15" height="15"/><rect x="291.5" y="168.5" width="15" height="15"/><rect x="310.5" y="168.5" width="15" height="15"/><rect x="329.5" y="168.5" width="15" height="15"/><rect x="348.5" y="168.5" width="15" height="15"/><rect x="177.5" y="187.5" width="15" height="15"/><rect x="196.5" y="187.5" width="15" height="15"/><rect x="215.5" y="187.5" width="15" height="15"/><rect x="234.5" y="187.5" width="15" height="15"/><rect x="253.5" y="187.5" width="15" height="15"/><rect x="272.5" y="187.5" width="15" height="15"/><rect x="291.5" y="187.5" width="15" height="15"/><rect x="310.5" y="187.5" width="15" height="15"/><rect x="329.5" y="187.5" width="15" height="15"/><rect x="348.5" y="187.5" width="15" height="15"/><rect x="177.5" y="206.5" width="15" height="15"/><rect x="196.5" y="206.5" width="15" height="15"/><rect x="215.5" y="206.5" width="15" height="15"/><rect x="234.5" y="206.5" width="15" height="15"/><rect x="253.5" y="206.5" width="15" height="15"/><rect x="272.5" y="206.5" width="15" height="15"/><rect x="291.5" y="206.5" width="15" height="15"/><rect x="310.5" y="206.5" width="15" height="15"/><rect x="329.5" y="206.5" width="15" height="15"/><rect x="348.5" y="206.5" width="15" height="15"/><rect x="177.5" y="225.5" width="15" height="15"/><rect x="196.5" y="225.5" width="15" height="15"/><rect x="215.5" y="225.5" width="15" height="15"/><rect x="234.5" y="225.5" width="15" height="15"/><rect x="253.5" y="225.5" width="15" height="15"/><rect x="272.5" y="225.5" width="15" height="15"/><rect x="291.5" y="225.5" width="15" height="15"/><rect x="310.5" y="225.5" width="15" height="15"/><rect x="329.5" y="225.5" width="15" height="15"/><rect x="348.5" y="225.5" width="15" height="15"/><rect x="177.5" y="244.5" width="15" height="15"/><rect x="196.5" y="244.5" width="15" height="15"/><rect x="215.5" y="244.5" width="15" height="15"/><rect x="234.5" y="244.5" width="15" height="15"/><rect x="253.5" y="244.5" width="15" height="15"/><rect x="272.5" y="244.5" width="15" height="15"/><rect x="291.5" y="244.5" width="15" height="15"/><rect x="310.5" y="244.5" width="15" height="15"/><rect x="329.5" y="244.5" width="15" height="15"/><rect x="348.5" y="244.5" width="15" height="15"/><rect x="177.5" y="263.5" width="15" height="15"/><rect x="196.5" y="263.5" width="15" height="15"/><rect x="215.5" y="263.5" width="15" height="15"/><rect x="234.5" y="263.5" width="15" height="15"/><rect x="253.5" y="263.5" width="15" height="15"/><rect x="272.5" y="263.5" width="15" height="15"/><rect x="291.5" y="263.5" width="15" height="15"/><rect x="310.5" y="263.5" width="15" height="15"/><rect x="329.5" y="263.5" width="15" height="15"/><rect x="348.5" y="263.5" width="15" height="15"/></g></svg>
<svg style="left:0;top:0" width="400" height="420"><rect x="178" y="291.5" width="13" height="12" fill="#3b3b3b"/><rect x="179.00" y="294.50" width="3.00" height="2.00" fill="#fff"/><rect x="179.00" y="297.50" width="3.00" height="2.00" fill="#fff"/><rect x="179.00" y="300.50" width="3.00" height="2.00" fill="#fff"/><rect x="183.00" y="294.50" width="3.00" height="2.00" fill="#fff"/><rect x="183.00" y="297.50" width="3.00" height="2.00" fill="#fff"/><rect x="183.00" y="300.50" width="3.00" height="2.00" fill="#fff"/><rect x="187.00" y="294.50" width="3.00" height="2.00" fill="#fff"/><rect x="187.00" y="297.50" width="3.00" height="2.00" fill="#fff"/><rect x="187.00" y="300.50" width="3.00" height="2.00" fill="#fff"/><rect x="182.00" y="294.5" width="1" height="8" fill="#9a9a9a"/><rect x="186.00" y="294.5" width="1" height="8" fill="#9a9a9a"/><rect x="179" y="296.50" width="11" height="1" fill="#9a9a9a"/><rect x="179" y="299.50" width="11" height="1" fill="#9a9a9a"/><rect x="178" y="315.5" width="13" height="12" fill="#3b3b3b"/><rect x="179.00" y="318.50" width="3.00" height="2.00" fill="#fff"/><rect x="179.00" y="321.50" width="3.00" height="2.00" fill="#fff"/><rect x="179.00" y="324.50" width="3.00" height="2.00" fill="#fff"/><rect x="183.00" y="318.50" width="3.00" height="2.00" fill="#fff"/><rect x="183.00" y="321.50" width="3.00" height="2.00" fill="#fff"/><rect x="183.00" y="324.50" width="3.00" height="2.00" fill="#fff"/><rect x="187.00" y="318.50" width="3.00" height="2.00" fill="#fff"/><rect x="187.00" y="321.50" width="3.00" height="2.00" fill="#fff"/><rect x="187.00" y="324.50" width="3.00" height="2.00" fill="#fff"/><rect x="182.00" y="318.5" width="1" height="8" fill="#9a9a9a"/><rect x="186.00" y="318.5" width="1" height="8" fill="#9a9a9a"/><rect x="179" y="320.50" width="11" height="1" fill="#9a9a9a"/><rect x="179" y="323.50" width="11" height="1" fill="#9a9a9a"/><path d="M182 325l9-9 2 2-9 9h-2z" fill="#1a6aaa" stroke="#f0f0f0" stroke-width="0.8"/><g fill="#7a7a7a"><rect x="177" y="340" width="8" height="1"/><rect x="177" y="342.5" width="8" height="1"/><rect x="177" y="345" width="8" height="1"/><rect x="177" y="347.5" width="8" height="1"/></g><path d="M182 337.5c2-3 7-3 8 1v2" fill="none" stroke="#7a7a7a" stroke-width="1"/><path d="M188 339.5l2 2.5 2-2.5z" fill="#7a7a7a"/><rect x="185.5" y="342.5" width="7" height="8.5" fill="#fff" stroke="#7a7a7a" stroke-width="1"/><g fill="#7a7a7a"><rect x="187.3" y="345.2" width="1.2" height="1.2"/><rect x="189.6" y="345.2" width="1.2" height="1.2"/><rect x="187.3" y="347.6" width="1.2" height="1.2"/><rect x="189.6" y="347.6" width="1.2" height="1.2"/></g><rect x="178" y="361.5" width="13" height="12" fill="#3b3b3b"/><rect x="179.00" y="364.50" width="3.00" height="2.00" fill="#fff"/><rect x="179.00" y="367.50" width="3.00" height="2.00" fill="#fff"/><rect x="179.00" y="370.50" width="3.00" height="2.00" fill="#fff"/><rect x="183.00" y="364.50" width="3.00" height="2.00" fill="#fff"/><rect x="183.00" y="367.50" width="3.00" height="2.00" fill="#fff"/><rect x="183.00" y="370.50" width="3.00" height="2.00" fill="#fff"/><rect x="187.00" y="364.50" width="3.00" height="2.00" fill="#fff"/><rect x="187.00" y="367.50" width="3.00" height="2.00" fill="#fff"/><rect x="187.00" y="370.50" width="3.00" height="2.00" fill="#fff"/><rect x="182.00" y="364.5" width="1" height="8" fill="#9a9a9a"/><rect x="186.00" y="364.5" width="1" height="8" fill="#9a9a9a"/><rect x="179" y="366.50" width="11" height="1" fill="#9a9a9a"/><rect x="179" y="369.50" width="11" height="1" fill="#9a9a9a"/><rect x="185.5" y="367" width="7.6" height="10" fill="#1d7a45" stroke="#f0f0f0" stroke-width="0.8"/><path d="M187.2 369.3l4.2 5.6M191.4 369.3l-4.2 5.6" stroke="#fff" stroke-width="1.2"/><rect x="178" y="387" width="13" height="12" fill="#3b3b3b"/><rect x="179.00" y="390.00" width="3.00" height="2.00" fill="#fff"/><rect x="179.00" y="393.00" width="3.00" height="2.00" fill="#fff"/><rect x="179.00" y="396.00" width="3.00" height="2.00" fill="#fff"/><rect x="183.00" y="390.00" width="3.00" height="2.00" fill="#fff"/><rect x="183.00" y="393.00" width="3.00" height="2.00" fill="#fff"/><rect x="183.00" y="396.00" width="3.00" height="2.00" fill="#fff"/><rect x="187.00" y="390.00" width="3.00" height="2.00" fill="#fff"/><rect x="187.00" y="393.00" width="3.00" height="2.00" fill="#fff"/><rect x="187.00" y="396.00" width="3.00" height="2.00" fill="#fff"/><rect x="182.00" y="390" width="1" height="8" fill="#9a9a9a"/><rect x="186.00" y="390" width="1" height="8" fill="#9a9a9a"/><rect x="179" y="392.00" width="11" height="1" fill="#9a9a9a"/><rect x="179" y="395.00" width="11" height="1" fill="#9a9a9a"/><path d="M365 389.5l4 3.5-4 3.5z" fill="#666"/></svg>
<div class="t" style="left:182.3px;top:110.2px;font:bold 12px 'Liberation Sans', sans-serif;line-height:12px;color:#474b55;transform:scaleX(0.9519);-webkit-text-stroke:0;">Вставка таблицы</div>
<div class="t" style="left:205.2px;top:290.6px;font:normal 12px 'Liberation Sans', sans-serif;line-height:12px;color:#1c1c1c;transform:scaleX(0.9688);"><u>В</u>ставить таблицу...</div>
<div class="t" style="left:205.2px;top:314.8px;font:normal 12px 'Liberation Sans', sans-serif;line-height:12px;color:#1c1c1c;transform:scaleX(0.9867);"><u>Н</u>арисовать таблицу</div>
<div class="t" style="left:205.2px;top:338.7px;font:normal 12px 'Liberation Sans', sans-serif;line-height:12px;color:#a0a0a0;transform:scaleX(0.9851);"><u>П</u>реобразовать в таблицу...</div>
<div class="t" style="left:205.2px;top:362.8px;font:normal 12px 'Liberation Sans', sans-serif;line-height:12px;color:#1c1c1c;transform:scaleX(0.9456);"><u>Т</u>аблица Excel</div>
<div class="t" style="left:205.2px;top:386.9px;font:normal 12px 'Liberation Sans', sans-serif;line-height:12px;color:#1c1c1c;transform:scaleX(1.0016);"><u>Э</u>кспресс-таблицы</div>
<svg style="left:0;top:0" width="1444" height="744"><defs><filter id="sh" x="-10%" y="-10%" width="120%" height="120%"><feGaussianBlur stdDeviation="0.8"/></filter></defs><path d="M209.0 22.6 L228.5 5.8 L230.4 16.0 L741.2 11.7 L743.2 13.9 L741.2 16.1 L230.4 28.2 L229.2 38.8 Z" fill="rgba(0,0,0,0.35)" stroke="rgba(0,0,0,0.35)" stroke-width="2" stroke-linejoin="round" filter="url(#sh)"/><path d="M167.2 86.4 L139.0 91.4 L146.5 97.8 L57.2 206.7 L58.4 208.6 L59.4 208.9 L156.9 106.3 L163.3 113.2 Z" fill="rgba(0,0,0,0.35)" stroke="rgba(0,0,0,0.35)" stroke-width="2" stroke-linejoin="round" filter="url(#sh)"/><path d="M394.1 303.3 L417.2 291.3 L414.6 301.6 L626.8 356.7 L627.5 358.8 L626.1 360.1 L411.6 313.7 L410.4 324.3 Z" fill="rgba(40,0,40,0.55)" stroke="rgba(40,0,40,0.55)" stroke-width="2" stroke-linejoin="round" filter="url(#sh)"/><path d="M207.8 20.8 L227.3 4.0 L229.2 14.2 L740.0 9.9 L742.0 12.1 L740.0 14.3 L229.2 26.4 L228.0 37.0 Z" fill="#93c83e" stroke="#93c83e" stroke-width="1" stroke-linejoin="round"/><path d="M166.0 84.6 L137.8 89.6 L145.3 96.0 L56.0 204.9 L57.2 206.8 L58.2 207.1 L155.7 104.5 L162.1 111.4 Z" fill="#f23a2e" stroke="#f23a2e" stroke-width="1" stroke-linejoin="round"/><path d="M392.9 301.5 L416.0 289.5 L413.4 299.8 L625.6 354.9 L626.3 357.0 L624.9 358.3 L410.4 311.9 L409.2 322.5 Z" fill="#b064b0" stroke="#b064b0" stroke-width="1" stroke-linejoin="round"/><rect x="164.4" y="37.4" width="62.5" height="70" rx="5" fill="none" stroke="#f23a2e" stroke-width="3"/><rect x="164.3" y="285.9" width="217.7" height="24.3" rx="4" fill="none" stroke="#b064b0" stroke-width="3"/><g fill="#2200ff"><rect x="519.5" y="129" width="47" height="53" rx="11"/><rect x="530" y="128.5" width="42" height="20" rx="9"/><rect x="556" y="147.5" width="124.5" height="24.5" rx="8"/><circle cx="579.2" cy="176.7" r="5"/><circle cx="607.3" cy="173.6" r="5"/><circle cx="618.5" cy="176.7" r="5.5"/><circle cx="669.6" cy="176.7" r="5"/><circle cx="609.8" cy="142.4" r="6.2"/><circle cx="630.3" cy="143" r="5.5"/><circle cx="653.4" cy="134.3" r="5"/></g><rect x="528.5" y="138" width="15" height="35" fill="#fff" stroke="#00c8f0" stroke-width="1"/><rect x="531" y="138" width="2" height="35" fill="#00c8f0"/><path d="M537 140.5l18 3.5-5 23-17-3.5z" fill="#fff" stroke="#00c8f0" stroke-width="1"/><path d="M539.5 146l11.5 2.3M539 149.3l11 2.2M538.2 152.6l11 2.2M537.5 156l8 1.6" stroke="#00c0f0" stroke-width="1.6"/><rect x="538.5" y="160.5" width="18" height="13" fill="#fff" stroke="#00c8f0" stroke-width="1"/><path d="M545 164.5h9.5M545 167.5h9.5M545 170.5h9.5" stroke="#00c0f0" stroke-width="1.5"/><rect x="540" y="163" width="3" height="8" fill="#00c8f0"/></svg>
<svg style="left:0;top:0" width="1444" height="744"><text x="8" y="250.9" font-family="Liberation Serif" font-size="46.5" textLength="175.5" lengthAdjust="spacingAndGlyphs" fill="#ffffff" stroke="#ffffff" stroke-width="7" stroke-linejoin="round">Выбрать</text><text x="8" y="250.9" font-family="Liberation Serif" font-size="46.5" textLength="175.5" lengthAdjust="spacingAndGlyphs" fill="#ff0000" stroke="#ff0000" stroke-width="0.15">Выбрать</text><text x="636" y="378.7" font-family="Liberation Serif" font-size="49" textLength="628" lengthAdjust="spacingAndGlyphs" fill="#8b05a8">Нажать для создания таблицы</text></svg>
<div class="t" style="left:560.5px;top:149.7px;font:bold 19px 'Liberation Serif', serif;line-height:19px;color:#fff;transform:scaleX(1.0175);">WorKProekT</div>
</body></html>
